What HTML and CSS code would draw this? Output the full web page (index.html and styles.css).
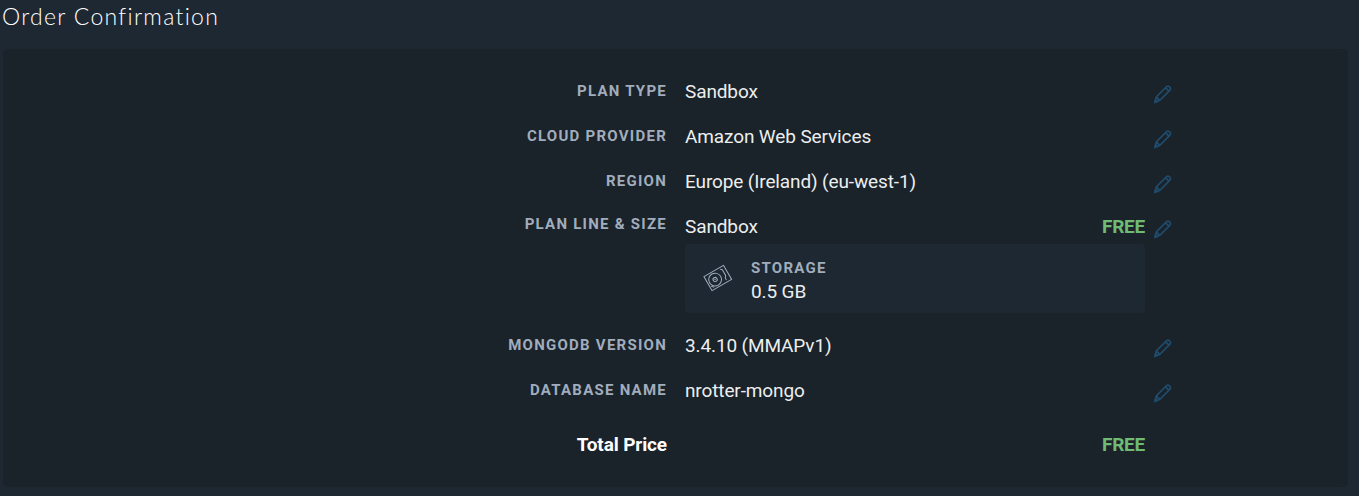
FILE: index.html
```html
<!DOCTYPE html>
<html lang="en">
<head>
<meta charset="utf-8">
<title>Order Confirmation</title>
<link rel="stylesheet" href="styles.css">
</head>
<body>
<svg class="defs" aria-hidden="true">
  <symbol id="pencil" viewBox="0 0 20 20">
    <path d="M2 18.2 L3.3 13 L13.6 2.7 Q15 1.5 16.3 2.7 L17 3.4 Q18.2 4.8 17 6.2 L6.9 16.3 Z M3.3 13 L6.9 16.3 M12.6 3.8 L16 7.2"/>
    <path d="M2 18.2 L2.6 15.9 L4.3 17.4 Z" fill="currentColor"/>
  </symbol>
</svg>
<h1 class="title">Order Confirmation</h1>
<main class="panel">
  <dl class="row"><dt class="label">Plan Type</dt><dd class="value">Sandbox</dd><dd class="edit"><svg class="pencil"><use href="#pencil"/></svg></dd></dl>
  <dl class="row"><dt class="label">Cloud Provider</dt><dd class="value">Amazon Web Services</dd><dd class="edit"><svg class="pencil"><use href="#pencil"/></svg></dd></dl>
  <dl class="row"><dt class="label">Region</dt><dd class="value">Europe (Ireland) (eu-west-1)</dd><dd class="edit"><svg class="pencil"><use href="#pencil"/></svg></dd></dl>
  <dl class="row row-plan"><dt class="label">Plan Line &amp; Size</dt>
    <dd class="value">
      <div class="line"><span>Sandbox</span><span class="free">FREE</span></div>
      <div class="storage">
        <svg class="disk" viewBox="0 0 30 28">
          <g transform="rotate(-30 15 14)">
            <rect x="3.5" y="5.8" width="22.6" height="16.2"/>
            <circle cx="11.7" cy="13.9" r="6.4"/>
            <circle cx="11.7" cy="13.9" r="2.1"/>
            <circle class="spindle" cx="11.7" cy="13.9" r="0.7"/>
            <path d="M7 20 L4.8 17.5 M21.3 7.6 L22.9 9 V15.6 L21.3 17.6 V20"/>
          </g>
        </svg>
        <div><div class="caption">Storage</div><div class="size">0.5 GB</div></div>
      </div>
    </dd>
    <dd class="edit"><svg class="pencil"><use href="#pencil"/></svg></dd></dl>
  <dl class="row"><dt class="label">MongoDB Version</dt><dd class="value">3.4.10 (MMAPv1)</dd><dd class="edit"><svg class="pencil"><use href="#pencil"/></svg></dd></dl>
  <dl class="row"><dt class="label">Database Name</dt><dd class="value">nrotter-mongo</dd><dd class="edit"><svg class="pencil"><use href="#pencil"/></svg></dd></dl>
  <dl class="row row-total"><dt class="total">Total Price</dt><dd class="value line"><span></span><span class="free">FREE</span></dd></dl>
</main>
</body>
</html>
```
FILE: styles.css
```css
* { box-sizing: border-box; }
body { margin: 0; height: 496px; overflow: hidden; background: #1e2833; color: #eceeef; font-family: Roboto, sans-serif; font-size: 19px; line-height: 24px; letter-spacing: -0.12px; }
.defs { display: none; }
.title { margin: 0; padding: 2px 0 0 2px; height: 49px; font: 300 23px/28px Lato, sans-serif; letter-spacing: 1.3px; color: #fff; }
.panel { margin: 0 11px 0 3px; height: 438px; padding-top: 31px; background: #1a222a; border-radius: 5px; }
.row { display: grid; grid-template-columns: 664px 460px 30px; column-gap: 18px; height: 45px; margin: 0; }
.row-plan { height: 119px; }
.row-total { padding-top: 9px; }
dd { margin: 0; }
.label, .caption { font-size: 15px; font-weight: 700; letter-spacing: 1.25px; text-transform: uppercase; color: #a1adbc; }
.label { text-align: right; line-height: 24px; margin-top: -1px; }
.row-plan .label { margin-top: -3px; }
.total { text-align: right; font-weight: 700; color: #fff; letter-spacing: -0.12px; }
.line { display: flex; justify-content: space-between; }
.free { color: #6dbb75; font-weight: 700; letter-spacing: -0.25px; }
.edit { margin-left: -10px; padding-top: 4px; }
.pencil { display: block; width: 20px; height: 20px; color: #204b6a; fill: none; stroke: currentColor; stroke-width: 1.7; }
.storage { display: flex; align-items: flex-start; height: 69px; margin-top: 5px; padding: 12px 18px; background: #1e2833; border-radius: 4px; }
.disk { width: 30px; height: 28px; margin: 8px 18px 0 0; fill: none; stroke: #a1adbc; stroke-width: 1; }
.spindle { fill: #a1adbc; stroke: none; }
```
